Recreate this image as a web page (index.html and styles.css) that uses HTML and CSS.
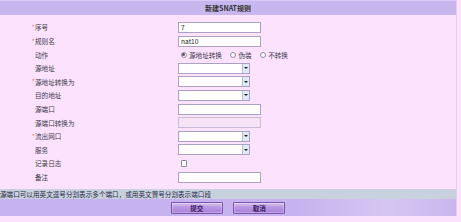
FILE: index.html
```html
<!DOCTYPE html>
<html lang="zh-CN">
<head>
    <meta charset="UTF-8">
    <title>新建SNAT规则</title>
    <link rel="stylesheet" href="styles.css">
</head>
<body>
    <div class="panel">
        <div class="panel-title">新建SNAT规则</div>

        <div class="form">
            <div class="label req">序号</div>
            <div class="field"><div class="text-input">7</div></div>

            <div class="label req">规则名</div>
            <div class="field"><div class="text-input">nat10</div></div>

            <div class="label">动作</div>
            <div class="field radios">
                <span class="radio checked"></span><span class="radio-text">源地址转换</span>
                <span class="radio"></span><span class="radio-text">伪装</span>
                <span class="radio"></span><span class="radio-text">不转换</span>
            </div>

            <div class="label">源地址</div>
            <div class="field"><div class="select"><span class="arrow"></span></div></div>

            <div class="label req">源地址转换为</div>
            <div class="field"><div class="select"><span class="arrow"></span></div></div>

            <div class="label">目的地址</div>
            <div class="field"><div class="select"><span class="arrow"></span></div></div>

            <div class="label">源端口</div>
            <div class="field"><div class="text-input"></div></div>

            <div class="label">源端口转换为</div>
            <div class="field"><div class="text-input disabled"></div></div>

            <div class="label req">流出网口</div>
            <div class="field"><div class="select"><span class="arrow"></span></div></div>

            <div class="label">服务</div>
            <div class="field"><div class="select"><span class="arrow"></span></div></div>

            <div class="label">记录日志</div>
            <div class="field"><span class="checkbox"></span></div>

            <div class="label">备注</div>
            <div class="field"><div class="text-input"></div></div>
        </div>

        <div class="hint">源端口可以用英文逗号分割表示多个端口，或用英文冒号分割表示端口段</div>

        <div class="actions">
            <button class="btn">提交</button>
            <button class="btn">取消</button>
        </div>
    </div>
</body>
</html>
```

FILE: styles.css
```css
* {
    margin: 0;
    padding: 0;
    box-sizing: border-box;
}

body {
    background: #fde2fd;
    font-family: "Noto Sans CJK SC", "Liberation Sans", sans-serif;
    font-size: 6.6px;
    color: #3a3a4a;
}

.panel {
    width: 457px;
    border-right: 1px solid #efc9f0;
}

.panel-title {
    height: 15px;
    line-height: 15px;
    text-align: center;
    font-weight: bold;
    font-size: 7px;
    color: #333;
    background: #c8b6ef;
    border-top: 1px solid #d8c8f4;
}

.form {
    display: grid;
    grid-template-columns: 178px 1fr;
    grid-auto-rows: 13.6px;
    padding: 5.7px 0 5.4px;
}

.label {
    display: flex;
    align-items: center;
    padding-left: 35px;
}

.label.req::before {
    content: "*";
    color: #e05050;
    width: 3px;
    margin-left: -3px;
    font-size: 5px;
    align-self: center;
    margin-top: -2px;
}

.field {
    display: flex;
    align-items: center;
}

.text-input {
    width: 83px;
    height: 11px;
    line-height: 9px;
    padding-left: 2px;
    background: #fff;
    border: 1px solid #aaa2c6;
    color: #222;
}

.text-input.disabled {
    background: #f6e4f6;
    border-color: #c8bcd8;
}

.select {
    width: 72px;
    height: 11px;
    background: #fff;
    border: 1px solid #aaa2c6;
    display: flex;
    justify-content: flex-end;
}

.arrow {
    width: 7px;
    background: #dfe9f7;
    border-left: 1px solid #b4bdd6;
    display: flex;
    align-items: center;
    justify-content: center;
}

.arrow::after {
    content: "";
    border-left: 2px solid transparent;
    border-right: 2px solid transparent;
    border-top: 2px solid #222;
}

.radios {
    padding-left: 2.5px;
}

.radio {
    width: 6px;
    height: 6px;
    border-radius: 50%;
    border: 1px solid #8a8aa0;
    background: #fff;
    display: inline-flex;
    align-items: center;
    justify-content: center;
}

.radio.checked::after {
    content: "";
    width: 3px;
    height: 3px;
    border-radius: 50%;
    background: #555;
}

.radio-text {
    margin: 0 8px 0 2.5px;
}

.checkbox {
    width: 6.5px;
    height: 6.5px;
    margin-left: 2.5px;
    border: 1px solid #8a8aa0;
    border-radius: 1px;
    background: #fff;
}

.hint {
    height: 10px;
    line-height: 10px;
    background: #c9d1de;
    color: #2a2a48;
    white-space: nowrap;
}

.actions {
    height: 16.7px;
    display: flex;
    justify-content: center;
    gap: 10.5px;
    padding-top: 2.7px;
    background: linear-gradient(90deg, #c6b2ee 0%, #c6b2ee 65%, #d6c6f2 85%, #c9b6ef 100%);
}

.btn {
    width: 52px;
    height: 12.3px;
    font-family: inherit;
    font-size: 6.6px;
    font-weight: bold;
    color: #3a2060;
    border: 1px solid #7d55ae;
    border-radius: 1px;
    background: linear-gradient(180deg, #d8c4f0 0%, #b996e2 45%, #a982d8 100%);
    box-shadow: inset 0 0 0 1px rgba(255, 255, 255, 0.25);
}
```
